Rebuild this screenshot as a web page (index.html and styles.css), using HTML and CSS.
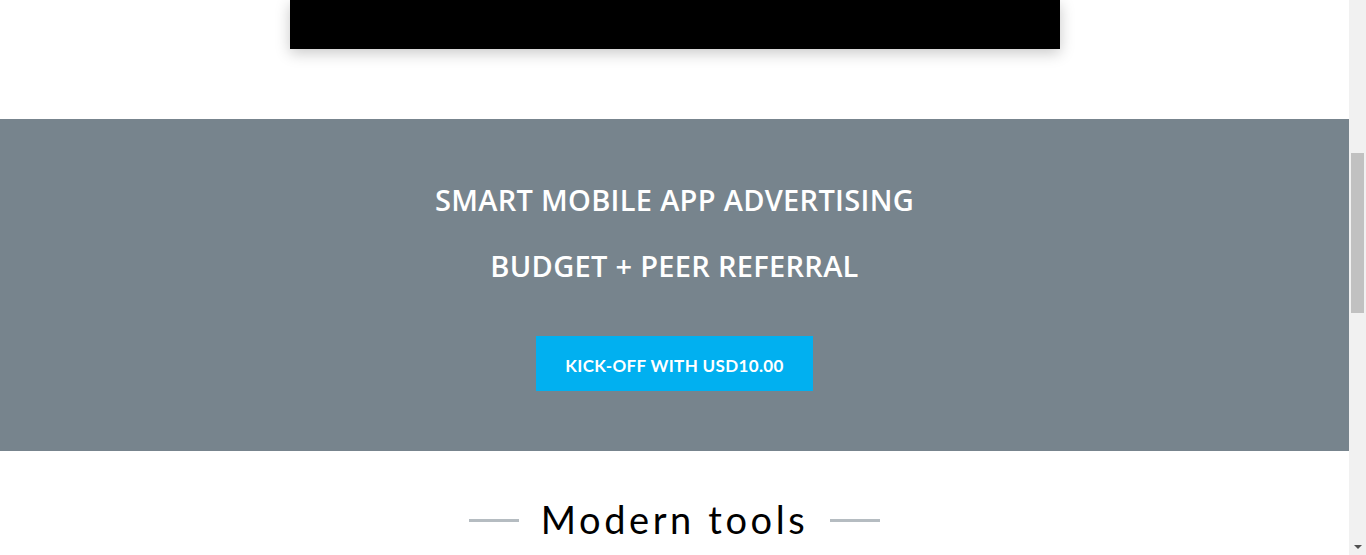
FILE: index.html
```html
<!DOCTYPE html>
<html>
<head>
<meta charset="utf-8">
<link rel="stylesheet" href="styles.css">
</head>
<body>
<div class="page">
  <main class="content">
    <section class="video-wrap">
      <div class="video"></div>
    </section>
    <section class="promo">
      <h2 class="promo-line">SMART MOBILE APP ADVERTISING</h2>
      <h2 class="promo-line">BUDGET + PEER REFERRAL</h2>
      <a class="cta" href="#">KICK-OFF WITH USD10.00</a>
    </section>
    <section class="tools">
      <span class="rule"></span>
      <h2 class="tools-title">Modern tools</h2>
      <span class="rule"></span>
    </section>
  </main>
  <div class="scrollbar">
    <div class="sb-arrow sb-up"></div>
    <div class="sb-track"><div class="sb-thumb"></div></div>
    <div class="sb-arrow sb-down"></div>
  </div>
</div>
</body>
</html>
```
FILE: styles.css
```css
* { box-sizing: border-box; margin: 0; padding: 0; }
html, body { height: 100%; overflow: hidden; background: #fff; }
body { font-family: "Lato", "Open Sans", sans-serif; }
.page { display: flex; height: 555px; }
.content { flex: 1; display: flex; flex-direction: column; overflow: hidden; }
.video-wrap { display: flex; justify-content: center; height: 119px; padding-left: 1px; }
.video { width: 770px; height: 49px; background: #000; box-shadow: 0 4px 14px rgba(0,0,0,0.22); }
.promo { background: #77848d; height: 332px; display: flex; flex-direction: column; align-items: center; padding-top: 62px; }
.promo-line { font-family: "Open Sans", sans-serif; color: #fff; font-weight: 600; font-size: 29px; letter-spacing: 0.3px; line-height: 38px; margin-bottom: 28px; }
.promo-line + .promo-line { margin-bottom: 0; }
.cta { margin-top: 51px; width: 277px; height: 55px; padding-top: 4px; background: #01b0f0; color: #fff; text-decoration: none; display: flex; align-items: center; justify-content: center; font-weight: 700; font-size: 17px; letter-spacing: 0.35px; }
.tools { display: flex; align-items: center; justify-content: center; gap: 22px; padding-top: 46px; }
.rule { width: 50px; height: 3px; background: #b5bcc1; margin-top: 2px; }
.tools-title { font-weight: 400; font-size: 38px; line-height: 44px; color: #000; letter-spacing: 3.6px; }
.scrollbar { width: 17px; background: #f1f1f1; display: flex; flex-direction: column; }
.sb-arrow { height: 17px; display: flex; align-items: center; justify-content: center; }
.sb-down::after { content: ""; border-left: 4px solid transparent; border-right: 4px solid transparent; border-top: 4px solid #505050; }
.sb-track { flex: 1; padding: 136px 2px 0; }
.sb-thumb { height: 160px; background: #c1c1c1; }
```
